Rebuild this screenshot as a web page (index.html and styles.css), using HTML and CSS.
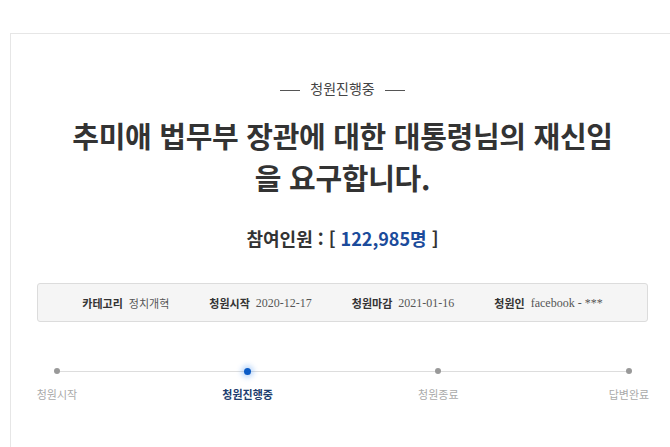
FILE: index.html
```html
<!DOCTYPE html>
<html lang="ko">
  <head>
    <meta charset="UTF-8" />
    <meta name="viewport" content="width=device-width, initial-scale=1.0" />
    <title>청원진행중</title>
    <link rel="stylesheet" href="styles.css">
  </head>
  <body>
    <div class="page">
      <div class="card">
        <p class="status">청원진행중</p>
        <h1 class="title">추미애 법무부 장관에 대한 대통령님의 재신임<br />을 요구합니다.</h1>
        <p class="count">참여인원 : [ <span class="num">122,985명</span> ]</p>

        <ul class="info">
          <li><strong>카테고리</strong><span>정치개혁</span></li>
          <li><strong>청원시작</strong><span>2020-12-17</span></li>
          <li><strong>청원마감</strong><span>2021-01-16</span></li>
          <li><strong>청원인</strong><span>facebook - ***</span></li>
        </ul>

        <ol class="steps">
          <li class="step"><i class="dot"></i><span>청원시작</span></li>
          <li class="step active"><i class="dot"></i><span>청원진행중</span></li>
          <li class="step"><i class="dot"></i><span>청원종료</span></li>
          <li class="step"><i class="dot"></i><span>답변완료</span></li>
        </ol>
      </div>
    </div>
  </body>
</html>
```

FILE: styles.css
```css
/* Page */
body {
  margin: 0;
  background: #fff;
  font-family: "Noto Sans CJK KR", "Noto Sans", sans-serif;
  color: #333;
  overflow: hidden;
}

.page {
  padding: 33px 0 0 10px;
}

/* Card */
.card {
  box-sizing: border-box;
  width: 665px;
  min-height: 430px;
  padding: 44px 26px 0;
  border: 1px solid #e6e6e6;
  border-bottom: none;
}

/* Status label with lines on both sides */
.status {
  margin: 0;
  text-align: center;
  font-size: 14px;
  line-height: 20px;
  color: #444;
}

.status::before,
.status::after {
  content: "";
  display: inline-block;
  width: 20px;
  height: 1px;
  background: #555;
  vertical-align: middle;
  margin: 0 10px;
}

/* Title */
.title {
  margin: 16px 0 0;
  text-align: center;
  font-size: 29px;
  line-height: 42px;
  font-weight: bold;
  color: #333;
  letter-spacing: -0.3px;
}

.count {
  margin: 27px 0 0;
  text-align: center;
  font-size: 18px;
  line-height: 26px;
  font-weight: bold;
  color: #333;
}

.count .num {
  color: #1b4b9b;
}

/* Info box */
.info {
  box-sizing: border-box;
  height: 39px;
  margin: 32px 0 0;
  padding: 0;
  list-style: none;
  display: flex;
  justify-content: center;
  align-items: center;
  gap: 40px;
  background: #f5f5f5;
  border: 1px solid #dcdcdc;
  border-radius: 3px;
}

.info li {
  display: flex;
  align-items: center;
  gap: 6px;
  line-height: 16px;
}

.info strong {
  font-size: 11px;
  color: #333;
}

.info span {
  font-family: "Liberation Serif", "Noto Sans CJK KR", serif;
  font-size: 12px;
  color: #555;
}

.info li:first-child span {
  font-family: "Noto Sans CJK KR", sans-serif;
  font-size: 11px;
}

/* Progress steps */
.steps {
  position: relative;
  margin: 45px -11px 0 -10px;
  padding: 0;
  list-style: none;
  display: flex;
  justify-content: space-between;
}

.steps::before {
  content: "";
  position: absolute;
  top: 4px;
  left: 30px;
  right: 30px;
  height: 1px;
  background: #ddd;
}

.step {
  position: relative;
  width: 60px;
  display: flex;
  flex-direction: column;
  align-items: center;
}

.dot {
  width: 6px;
  height: 6px;
  margin: 1px 0 12px;
  border-radius: 50%;
  background: #999;
}

.step span {
  font-size: 11px;
  line-height: 16px;
  color: #aaa;
  white-space: nowrap;
}

.step.active .dot {
  width: 7px;
  height: 7px;
  margin: 1px 0 11px;
  background: #0b5bc6;
  box-shadow: 0 0 5px 3px rgba(60, 140, 240, 0.3);
}

.step.active span {
  font-weight: bold;
  color: #1d3d6e;
}
```
